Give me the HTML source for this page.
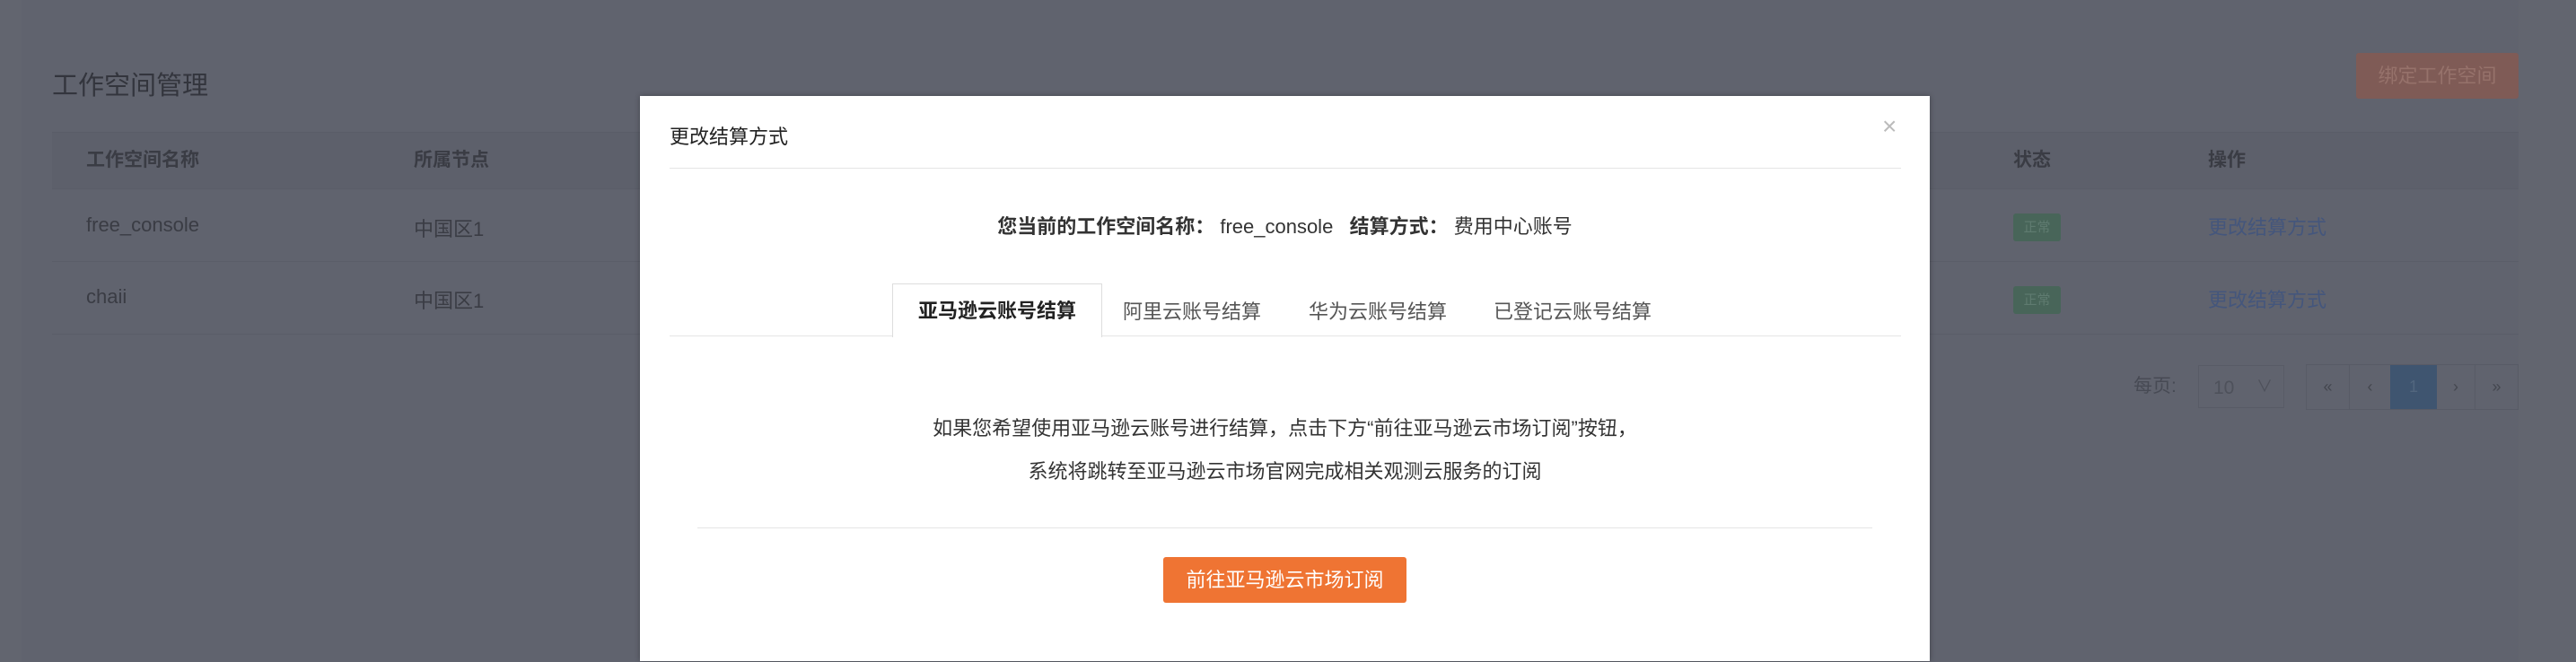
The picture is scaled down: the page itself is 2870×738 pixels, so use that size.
<!DOCTYPE html>
<html><head><meta charset="utf-8"><style>
*{margin:0;padding:0;box-sizing:border-box}
body{width:2870px;height:738px;overflow:hidden;background:#62656f;font-family:"Liberation Sans","Noto Sans CJK SC",sans-serif;position:relative;color:#2e3038}
.a{position:absolute;white-space:nowrap}
.bg{position:absolute;left:24px;top:0;width:2782px;height:738px;background:#60636e}
.m{position:absolute;left:713px;top:107px;width:1437px;height:630px;background:#fff;box-shadow:0 0 6px rgba(0,0,0,.3)}
</style></head><body>
<div class="bg"></div>
<div class="a" style="left:58px;top:72px;font-size:29px;color:#33353d">工作空间管理</div>
<div class="a" style="left:2625px;top:59px;width:181px;height:51px;background:#7f5b56;border-radius:3px;color:#96726b;font-size:22px;line-height:51px;text-align:center">绑定工作空间</div>
<div class="a" style="left:58px;top:147px;width:2748px;height:64px;background:#5d606b;border-top:1px solid #5a5d68;border-bottom:1px solid #5a5d68"></div>
<div class="a" style="left:96px;top:162px;font-size:21px;font-weight:bold;color:#3a3c44">工作空间名称</div>
<div class="a" style="left:461px;top:162px;font-size:21px;font-weight:bold;color:#3a3c44">所属节点</div>
<div class="a" style="left:2243px;top:162px;font-size:21px;font-weight:bold;color:#3a3c44">状态</div>
<div class="a" style="left:2460px;top:162px;font-size:21px;font-weight:bold;color:#3a3c44">操作</div>
<div class="a" style="left:58px;top:291px;width:2748px;height:1px;background:#5a5d68"></div>
<div class="a" style="left:58px;top:372px;width:2748px;height:1px;background:#5a5d68"></div>
<div class="a" style="left:96px;top:238px;font-size:22px;color:#3a3c44">free_console</div>
<div class="a" style="left:461px;top:238px;font-size:22px;color:#3a3c44">中国区1</div>
<div class="a" style="left:96px;top:318px;font-size:22px;color:#3a3c44">chaii</div>
<div class="a" style="left:461px;top:318px;font-size:22px;color:#3a3c44">中国区1</div>
<div class="a" style="left:2243px;top:238px;width:53px;height:31px;background:#486559;border-radius:3px;font-size:15px;line-height:31px;text-align:center;color:#5f7b70">正常</div>
<div class="a" style="left:2243px;top:319px;width:53px;height:31px;background:#486559;border-radius:3px;font-size:15px;line-height:31px;text-align:center;color:#5f7b70">正常</div>
<div class="a" style="left:2460px;top:236px;font-size:22px;color:#44567c">更改结算方式</div>
<div class="a" style="left:2460px;top:317px;font-size:22px;color:#44567c">更改结算方式</div>
<div class="a" style="left:2377px;top:414px;font-size:21px;color:#474a54">每页:</div>
<div class="a" style="left:2449px;top:407px;width:96px;height:48px;border:1px solid #585b66;font-size:21px;color:#4e515b;line-height:50px;padding-left:16px">10<span style="position:absolute;right:12px;top:-2px;font-size:18px">∨</span></div>
<div class="a" style="left:2569px;top:406px;width:237px;height:51px;border:1px solid #585b66;display:flex;font-size:18px;color:#44474f;line-height:49px;text-align:center">
<div style="width:48px;border-right:1px solid #585b66">«</div><div style="width:45px">‹</div><div style="width:52px;background:#3f5570;color:#52667e">1</div><div style="width:43px;border-right:1px solid #585b66">›</div><div style="flex:1">»</div></div>
<div class="m">
<div class="a" style="left:33px;top:28px;font-size:22px;color:#222">更改结算方式</div>
<div class="a" style="left:1384px;top:18px;font-size:28px;color:#bbb">×</div>
<div class="a" style="left:33px;top:80px;width:1372px;height:1px;background:#e5e5e5"></div>
<div class="a" style="left:0;top:128px;width:1437px;text-align:center;font-size:22px;color:#333"><b>您当前的工作空间名称：</b> free_console &nbsp; <b>结算方式：</b> 费用中心账号</div>
<div class="a" style="left:33px;top:267px;width:1372px;height:1px;background:#e5e5e5"></div>
<div class="a" style="left:281px;top:209px;width:234px;height:60px;background:#fff;border:1px solid #ddd;border-bottom:none;font-size:22px;font-weight:bold;text-align:center;line-height:60px;color:#222">亚马逊云账号结算</div>
<div class="a" style="left:538px;top:223px;font-size:22px;color:#555">阿里云账号结算</div>
<div class="a" style="left:745px;top:223px;font-size:22px;color:#555">华为云账号结算</div>
<div class="a" style="left:951px;top:223px;font-size:22px;color:#555">已登记云账号结算</div>
<div class="a" style="left:0;top:353px;width:1437px;text-align:center;font-size:22px;color:#333">如果您希望使用亚马逊云账号进行结算，点击下方“前往亚马逊云市场订阅”按钮，</div>
<div class="a" style="left:0;top:401px;width:1437px;text-align:center;font-size:22px;color:#333">系统将跳转至亚马逊云市场官网完成相关观测云服务的订阅</div>
<div class="a" style="left:64px;top:481px;width:1309px;height:1px;background:#e5e5e5"></div>
<div class="a" style="left:583px;top:514px;width:271px;height:51px;background:#ef7433;border-radius:3px;color:#fff;font-size:22px;line-height:51px;text-align:center">前往亚马逊云市场订阅</div>
</div>
</body></html>
